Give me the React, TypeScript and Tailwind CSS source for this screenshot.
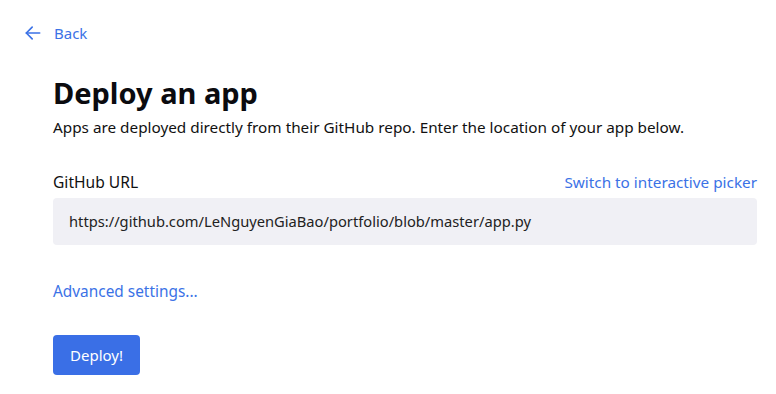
import React from "react";

export default function App() {
  return (
    <div className="w-[776px] h-[394px] bg-white text-[#111] overflow-hidden" style={{ fontFamily: "'Noto Sans', sans-serif" }}>
      <div className="pt-[23px] pl-[23px] flex items-center gap-[11px] text-[#3b72e6] text-[15px] leading-[20px]">
        <svg width="20" height="20" viewBox="0 0 24 24" fill="none" stroke="currentColor" strokeWidth="2" strokeLinecap="round" strokeLinejoin="round">
          <path d="M20 12H4" />
          <path d="M11 5l-7 7 7 7" />
        </svg>
        <span>Back</span>
      </div>
      <div className="pl-[53px] pr-[19px] pt-[30px]">
        <h1 className="text-[29px] leading-[40px] font-bold text-[#0b0b0f]">Deploy an app</h1>
        <p className="mt-[3px] text-[15.3px] leading-[22px] text-[#111]">Apps are deployed directly from their GitHub repo. Enter the location of your app below.</p>
        <div className="mt-[34px] flex justify-between items-center text-[15.3px] leading-[20px]">
          <span className="text-[#111] text-[15.6px]">GitHub URL</span>
          <span className="text-[#3b72e6]">Switch to interactive picker</span>
        </div>
        <div className="mt-[6px] h-[47px] rounded-[4px] bg-[#f0f0f5] flex items-center pl-[16px] text-[14.7px] text-[#222]">
          https://github.com/LeNguyenGiaBao/portfolio/blob/master/app.py
        </div>
        <div className="mt-[37px] text-[15.4px] leading-[20px] text-[#3b72e6]">Advanced settings...</div>
        <button className="mt-[33px] h-[40px] px-[17px] rounded-[4px] bg-[#3a6fe6] text-white text-[15px]">Deploy!</button>
      </div>
    </div>
  );
}
